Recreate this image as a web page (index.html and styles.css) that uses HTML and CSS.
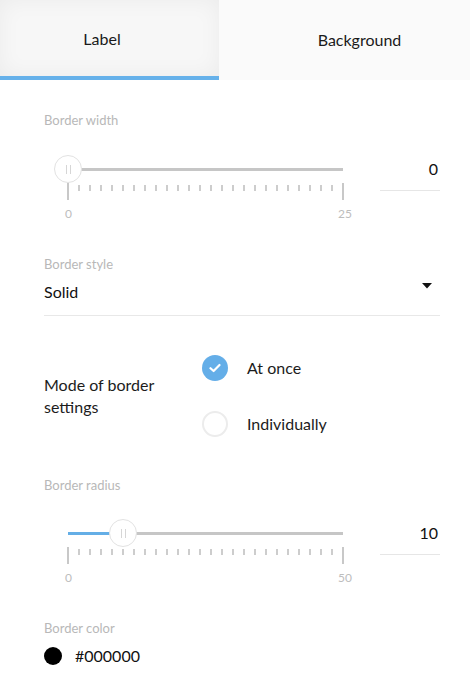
FILE: index.html
```html
<!DOCTYPE html>
<html>
<head>
<meta charset="utf-8">
<link rel="stylesheet" href="styles.css">
</head>
<body>
<div class="tabs">
  <div class="tab active">Label</div>
  <div class="tab">Background</div>
</div>
<div class="content">
  <div class="field-label first">Border width</div>
  <div class="slider-row">
    <div class="slider-col">
      <div class="slider">
        <div class="track"></div>
        <div class="thumb" style="left:0px"><span></span><span></span></div>
      </div>
      <div class="ticks">
        <i class="big"></i><i></i><i></i><i></i><i></i><i></i><i></i><i></i><i></i><i></i><i></i><i></i><i></i><i></i><i></i><i></i><i></i><i></i><i></i><i></i><i></i><i></i><i></i><i></i><i></i><i class="big"></i>
      </div>
      <div class="scale"><span>0</span><span>25</span></div>
    </div>
    <div class="value">0</div>
  </div>

  <div class="field-label gap">Border style</div>
  <div class="select">
    <span>Solid</span>
    <svg class="caret" width="10" height="6" viewBox="0 0 10 6"><path d="M0 0 H10 L5 5.5 Z" fill="#111"/></svg>
  </div>

  <div class="mode">
    <div class="mode-text">Mode of border settings</div>
    <div class="options">
      <div class="option">
        <span class="radio checked">
          <svg width="12" height="10" viewBox="0 0 12 10"><path d="M1.5 5.2 L4.6 8 L10.5 2" fill="none" stroke="#fff" stroke-width="2.2" stroke-linecap="round" stroke-linejoin="round"/></svg>
        </span>
        <span>At once</span>
      </div>
      <div class="option">
        <span class="radio"></span>
        <span>Individually</span>
      </div>
    </div>
  </div>

  <div class="field-label gap2">Border radius</div>
  <div class="slider-row second">
    <div class="slider-col">
      <div class="slider">
        <div class="track"></div>
        <div class="fill" style="width:55px"></div>
        <div class="thumb" style="left:55px"><span></span><span></span></div>
      </div>
      <div class="ticks">
        <i class="big"></i><i></i><i></i><i></i><i></i><i></i><i></i><i></i><i></i><i></i><i></i><i></i><i></i><i></i><i></i><i></i><i></i><i></i><i></i><i></i><i></i><i></i><i></i><i></i><i></i><i class="big"></i>
      </div>
      <div class="scale"><span>0</span><span>50</span></div>
    </div>
    <div class="value">10</div>
  </div>

  <div class="field-label gap">Border color</div>
  <div class="color-row">
    <span class="swatch"></span>
    <span>#000000</span>
  </div>
</div>
</body>
</html>
```

FILE: styles.css
```css
* { box-sizing: border-box; }
html, body { margin: 0; padding: 0; background: #fff; }
body {
  font-family: "Lato", "Noto Sans", sans-serif;
  color: #1c1c1c;
  width: 470px;
}
.tabs {
  display: flex;
  height: 80px;
}
.tab {
  display: flex;
  align-items: center;
  justify-content: center;
  font-size: 16px;
  color: #1a1a1a;
  background: #fafafa;
  padding-bottom: 2px;
}
.tab:first-child {
  width: 219px;
  background: #f7f7f7;
  box-shadow: inset 0 0 22px rgba(0,0,0,0.05);
  border-bottom: 4px solid #66b1ea;
  padding-right: 15px;
  padding-bottom: 0;
}
.tab:last-child { flex: 1; padding-left: 30px; }

.content {
  padding: 0 30px 0 44px;
}
.field-label {
  font-size: 13px;
  line-height: 18px;
  color: #b8b8b8;
}
.field-label.first { margin-top: 31px; }
.field-label.gap { margin-top: 34px; }
.field-label.gap2 { margin-top: 39px; }

.slider-row {
  display: flex;
  align-items: flex-start;
  margin-top: 26px;
}
.slider-row.second { margin-top: 25px; }
.slider-col {
  padding-left: 24px;
  width: 300px;
}
.slider {
  position: relative;
  width: 275px;
  height: 28px;
}
.track {
  position: absolute;
  left: 0; right: 0;
  top: 12.5px;
  height: 3.5px;
  background: #c6c6c6;
}
.fill {
  position: absolute;
  left: 0;
  top: 12.5px;
  height: 3.5px;
  background: #64aee6;
}
.thumb {
  position: absolute;
  top: 0;
  width: 28px;
  height: 28px;
  margin-left: -14px;
  border-radius: 50%;
  background: #fff;
  border: 1px solid #e2e2e2;
  display: flex;
  align-items: center;
  justify-content: center;
  gap: 3px;
}
.thumb span {
  width: 1px;
  height: 9px;
  background: #d6d6d6;
}
.ticks {
  display: flex;
  justify-content: space-between;
  align-items: flex-start;
  width: 277px;
  margin-left: -1px;
  height: 17px;
}
.ticks i {
  display: block;
  width: 2px;
  height: 6px;
  margin-top: 2px;
  background: #cdcdcd;
}
.ticks i.big {
  height: 17px;
  margin-top: 0;
  background: #c8c8c8;
}
.scale {
  display: flex;
  justify-content: space-between;
  width: 287px;
  margin-left: -3px;
  margin-top: 7px;
  font-size: 12px;
  line-height: 14px;
  color: #bdbdbd;
}
.value {
  margin-left: auto;
  width: 60px;
  text-align: right;
  font-size: 16px;
  line-height: 28px;
  padding-bottom: 7px;
  padding-right: 2px;
  border-bottom: 1px solid #e6e6e6;
  color: #111;
}

.select {
  display: flex;
  align-items: center;
  justify-content: space-between;
  margin-top: 8px;
  font-size: 16px;
  line-height: 22px;
  padding-bottom: 12px;
  border-bottom: 1px solid #e8e8e8;
  color: #111;
}
.caret {
  margin-right: 8px;
  margin-top: -12px;
}

.mode {
  display: flex;
  align-items: center;
  margin-top: 39px;
}
.mode-text {
  width: 158px;
  padding-right: 40px;
  font-size: 16px;
  line-height: 22px;
  color: #1c1c1c;
}
.options {
  display: flex;
  flex-direction: column;
  gap: 30px;
}
.option {
  display: flex;
  align-items: center;
  gap: 19px;
  font-size: 16px;
  line-height: 26px;
  color: #1c1c1c;
}
.radio {
  width: 26px;
  height: 26px;
  border-radius: 50%;
  border: 2px solid #ececec;
  display: flex;
  align-items: center;
  justify-content: center;
}
.radio.checked {
  border: none;
  background: #64aee8;
}

.color-row {
  display: flex;
  align-items: center;
  gap: 13px;
  margin-top: 8px;
  font-size: 16px;
  line-height: 22px;
  color: #111;
}
.swatch {
  width: 18px;
  height: 18px;
  border-radius: 50%;
  background: #000;
}
```
